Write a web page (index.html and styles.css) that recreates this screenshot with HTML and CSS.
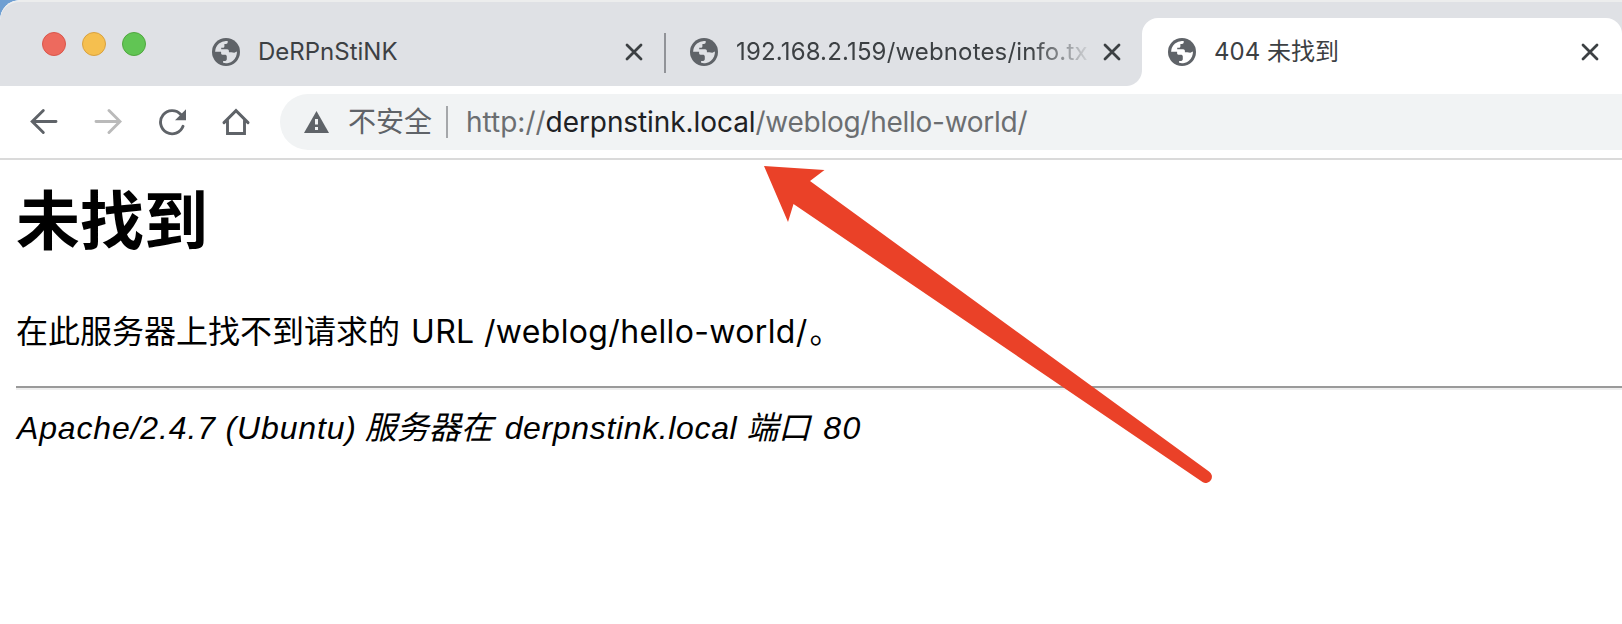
FILE: index.html
```html
<!DOCTYPE html>
<html lang="zh-CN">
<head>
<meta charset="utf-8">
<title>404 未找到</title>
<link rel="stylesheet" href="styles.css">
</head>
<body>
<svg class="defs" width="0" height="0">
  <symbol id="globe" viewBox="0 0 28 28">
    <circle class="globe-sea" cx="14" cy="14" r="14"/>
    <path class="globe-land" d="M3.1 13.7A11 11 0 0 1 15.7 3.1V4.3C15.7 5.3 14.9 6 14 6H12.4V8.2C12.4 9.3 11.7 9.8 10.8 9.8H9.2V11.2H15.2C16.2 11.2 16.9 12 16.9 13V14.2H19.2C20.8 14.2 22 15.2 22.8 14.5L24.9 13.4A11 11 0 0 1 11.1 24.8V22.9H13.1C14.2 22.9 14.8 22.1 14.8 21.1V18.5C14.8 17.2 13.9 16.7 12.9 16.7H10.5C9.5 16.7 9.1 16 9.1 15V13.7Z"/>
  </symbol>
  <symbol id="close" viewBox="0 0 18 18"><path class="close-line" d="M2 2L16 16M16 2L2 16"/></symbol>
</svg>
<div class="window">
  <header class="tab-strip">
    <div class="lights"><i class="light red"></i><i class="light yellow"></i><i class="light green"></i></div>
    <div class="tab">
      <svg class="favicon"><use href="#globe"/></svg>
      <span class="tab-title">DeRPnStiNK</span>
      <svg class="close"><use href="#close"/></svg>
    </div>
    <div class="tab divided">
      <svg class="favicon"><use href="#globe"/></svg>
      <span class="tab-title fade">192.168.2.159/webnotes/info.tx</span>
      <svg class="close"><use href="#close"/></svg>
    </div>
    <div class="tab active">
      <svg class="favicon"><use href="#globe"/></svg>
      <span class="tab-title">404 未找到</span>
      <svg class="close"><use href="#close"/></svg>
    </div>
  </header>
  <nav class="toolbar">
    <svg class="nav" viewBox="0 0 28 28"><path d="M26 13.5H3M13.3 2.5L2.2 13.5L13.3 24.5"/></svg>
    <svg class="nav off" viewBox="0 0 28 28"><path d="M2 13.5H25M15 2.5L26 13.5L15 24.5"/></svg>
    <svg class="nav" viewBox="0 0 28 28"><path d="M25 18.3A11.6 11.6 0 1 1 22.8 6.5"/><path class="solid" d="M28 1.2V12.2H17Z"/></svg>
    <svg class="nav" viewBox="0 0 28 28"><path d="M2 14.6L14 2.6L26 14.6M5.5 12.5V25.5H22.5V12.5"/></svg>
    <div class="omnibox">
      <svg class="warn" viewBox="0 0 25 22"><path class="solid" d="M12.5 0L25 22H0Z"/><path class="mark" d="M12.5 8V13.5M12.5 16V19"/></svg>
      <span class="insecure">不安全</span>
      <span class="bar"></span>
      <span class="url">http://<b>derpnstink.local</b><span class="url-path">/weblog/hello-world/</span></span>
    </div>
  </nav>
  <main class="page">
    <h1>未找到</h1>
    <p>在此服务器上找不到请求的 <span class="path">URL /weblog/hello-world/</span>。</p>
    <hr>
    <address><span class="server">Apache/2.4.7 (Ubuntu)</span> 服务器在 <span class="host">derpnstink.local</span> 端口 <span class="port">80</span></address>
  </main>
</div>
<svg class="arrow" viewBox="0 0 450 320"><path d="M0 0L60.5 4L46 15L445 305.5A6 6 0 0 1 438.5 316L29.5 38L24 56Z"/></svg>
</body>
</html>
```

FILE: styles.css
```css
body { margin: 0; background: #6f9fd2; overflow: hidden; }
.defs { position: absolute; }
.window { position: relative; height: 624px; background: #fff; border-radius: 20px 0 0 0; overflow: hidden; }
.tab-strip { display: flex; height: 86px; box-sizing: border-box; background: #dfe1e5; border-top: 2px solid #eceded; border-radius: 20px 0 0 0; }
.lights { display: flex; gap: 16px; width: 144px; padding: 30px 0 0 42px; }
.light { width: 24px; height: 24px; border-radius: 50%; box-sizing: border-box; border: 1px solid; }
.red { background: #ed6a5e; border-color: #d9564b; }
.yellow { background: #f5bf4f; border-color: #d8a140; }
.green { background: #61c554; border-color: #50a73f; }
.tab { display: flex; width: 478px; height: 68px; margin-top: 16px; padding: 0 23px 0 26px; box-sizing: border-box; align-items: center; flex: none; position: relative; }
.divided::before { content: ""; position: absolute; left: 0; top: 15px; width: 2px; height: 40px; background: #919398; }
.active { width: 480px; padding-right: 25px; background: #fff; border-radius: 16px 16px 0 0; }
.active::before { content: ""; position: absolute; left: -16px; bottom: 0; width: 16px; height: 16px; background: radial-gradient(circle at 0 0, #dfe1e5 15.5px, #fff 16.5px); }
.favicon { width: 28px; height: 28px; flex: none; }
.globe-sea { fill: #5f6368; }
.active .favicon { --land: #fff; }
.globe-land { fill: var(--land, #dfe1e5); }
.close { width: 18px; height: 18px; flex: none; margin-left: auto; margin-right: -2px; }
.close-line { fill: none; stroke: #3c4043; stroke-width: 2.8; stroke-linecap: round; }
.tab-title { font: 24px/34px Inter, "Noto Sans CJK SC", sans-serif; color: #3c4043; margin-left: 18px; width: 352px; white-space: nowrap; }
.fade { letter-spacing: 0.15px; -webkit-mask-image: linear-gradient(90deg, #000 295px, transparent 358px); mask-image: linear-gradient(90deg, #000 295px, transparent 358px); }
.toolbar { display: flex; align-items: center; height: 72px; padding-left: 30px; gap: 36px; border-bottom: 2px solid #dadada; }
.nav { width: 28px; height: 28px; flex: none; fill: none; stroke: #5f6368; stroke-width: 2.9; stroke-linecap: round; }
.off { stroke: #bababa; }
.solid { fill: #5f6368; stroke: none; }
.omnibox { display: flex; align-items: center; flex: 1; height: 56px; background: #f1f3f4; border-radius: 28px 0 0 28px; margin-left: -6px; padding-left: 24px; font: 28px/40px Inter, "Noto Sans CJK SC", sans-serif; color: #5f6368; white-space: nowrap; }
.warn { width: 25px; height: 22px; margin-right: 19px; flex: none; }
.mark { stroke: #f1f3f4; stroke-width: 3; }
.bar { width: 2px; height: 32px; background: #a5a7aa; margin: 0 18px 0 14px; }
.url { color: #6b6e71; }
.url b { font-weight: 400; color: #202124; letter-spacing: -0.08px; }
.url-path { letter-spacing: -0.27px; }
.page { padding: 14px 0 0 16px; font: 32px/48px Inter, "Noto Sans CJK SC", sans-serif; color: #000; white-space: nowrap; }
h1 { margin: 0; font: 700 64px/84px "Noto Sans CJK SC", sans-serif; }
p { margin: 50px 0 0; }
.path { letter-spacing: 0.35px; margin: 0 2px 0 2px; }
hr { margin: 30px 0 0; border: 0; height: 2px; background: #9a9a9a; border-bottom: 2px solid #eee; }
address { margin-top: 14px; font: italic 32px/48px "Liberation Sans", "Noto Sans CJK SC", sans-serif; }
.server { letter-spacing: 0.85px; margin-left: 1px; margin-right: -1px; }
.host { letter-spacing: 0.65px; margin-left: 3px; }
.port { letter-spacing: 1.5px; margin-left: 4px; }
.arrow { position: absolute; left: 764px; top: 166px; width: 450px; height: 320px; fill: #ea4128; }
```
